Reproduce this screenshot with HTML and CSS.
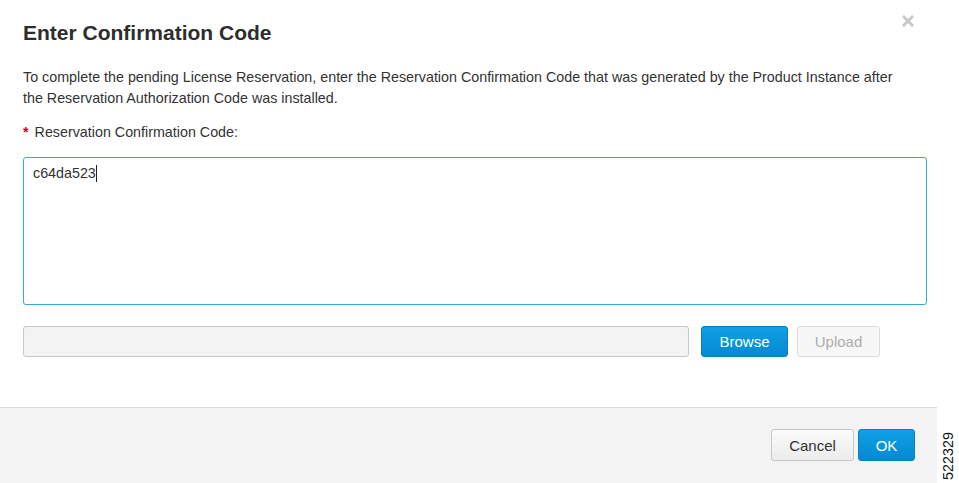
FILE: index.html
```html
<!DOCTYPE html>
<html>
<head>
<meta charset="utf-8">
<link rel="stylesheet" href="styles.css">
</head>
<body>
<div class="page">
  <div class="dialog">
    <div class="body">
      <div class="head">
        <h1 class="title">Enter Confirmation Code</h1>
        <button class="close" aria-label="Close">
          <svg width="12" height="12" viewBox="0 0 12 12"><path d="M2 2 L10 10 M10 2 L2 10" stroke="#c9c9c9" stroke-width="3" stroke-linecap="square"/></svg>
        </button>
      </div>
      <p class="intro">To complete the pending License Reservation, enter the Reservation Confirmation Code that was generated by the Product Instance after the Reservation Authorization Code was installed.</p>
      <div class="label"><span class="req">*</span> Reservation Confirmation Code:</div>
      <div class="textarea"><span>c64da523</span><span class="caret"></span></div>
      <div class="filerow">
        <div class="filefield"></div>
        <button class="btn btn-primary browse">Browse</button>
        <button class="btn btn-disabled upload">Upload</button>
      </div>
    </div>
    <div class="footer">
      <button class="btn btn-default cancel">Cancel</button>
      <button class="btn btn-primary ok">OK</button>
    </div>
  </div>
  <div class="side"><span class="side-num">522329</span></div>
</div>
</body>
</html>
```

FILE: styles.css
```css
html, body {
  margin: 0;
  padding: 0;
  background: #fff;
}
body {
  font-family: "Liberation Sans", Arial, sans-serif;
  color: #333;
}
.page {
  display: flex;
  width: 959px;
  height: 483px;
}
.dialog {
  width: 937px;
  height: 483px;
  display: flex;
  flex-direction: column;
  background: #fff;
}
.body {
  flex: 1;
  padding: 0 10px 0 23px;
}
.head {
  display: flex;
  justify-content: space-between;
  align-items: flex-start;
}
.title {
  margin: 21px 0 0 0;
  font-size: 21px;
  line-height: 24px;
  font-weight: bold;
  color: #2d2d2d;
}
.close {
  border: 0;
  background: none;
  padding: 0;
  margin: 15px 13px 0 0;
  width: 12px;
  height: 12px;
  display: block;
}
.close svg { display: block; }
.intro {
  margin: 22px 0 0 0;
  width: 880px;
  font-size: 14.3px;
  line-height: 21px;
  color: #333;
}
.label {
  margin-top: 13px;
  font-size: 14.3px;
  line-height: 20px;
  color: #333;
}
.req {
  color: #d0021b;
  font-weight: bold;
  margin-right: 2px;
}
.textarea {
  margin-top: 15px;
  width: 904px;
  height: 148px;
  box-sizing: border-box;
  border: 1px solid #35abd9;
  border-radius: 3px;
  padding: 5px 9px;
  font-size: 14.3px;
  line-height: 20px;
  color: #333;
  display: flex;
  align-items: flex-start;
}
.caret {
  display: inline-block;
  width: 1px;
  height: 17px;
  margin-top: 2px;
  background: #222;
}
.filerow {
  display: flex;
  align-items: center;
  margin-top: 21px;
}
.filefield {
  width: 666px;
  height: 31px;
  box-sizing: border-box;
  background: #f3f3f3;
  border: 1px solid #c8c8c8;
  border-radius: 3px;
}
.btn {
  font-family: "Liberation Sans", Arial, sans-serif;
  font-size: 15px;
  box-sizing: border-box;
  border-radius: 3px;
  padding: 0;
  display: flex;
  align-items: center;
  justify-content: center;
}
.btn-primary {
  background: linear-gradient(#0fa0e3, #0689d2);
  border: 1px solid #0a7fc2;
  color: #fff;
}
.btn-default {
  background: linear-gradient(#fbfbfb, #ececec);
  border: 1px solid #c6c6c6;
  color: #333;
}
.btn-disabled {
  background: #f7f7f7;
  border: 1px solid #dcdcdc;
  color: #adadad;
}
.browse {
  margin-left: 12px;
  width: 87px;
  height: 31px;
}
.upload {
  margin-left: 9px;
  width: 83px;
  height: 31px;
}
.footer {
  height: 76px;
  box-sizing: border-box;
  border-top: 1px solid #dcdcdc;
  background: #f3f3f3;
  display: flex;
  justify-content: flex-end;
  align-items: flex-start;
  padding: 21px 22px 0 0;
}
.cancel {
  width: 83px;
  height: 32px;
}
.ok {
  margin-left: 4px;
  width: 57px;
  height: 32px;
}
.side {
  flex: 1;
  display: flex;
  align-items: flex-end;
  justify-content: center;
  padding-bottom: 3px;
}
.side-num {
  writing-mode: vertical-rl;
  transform: rotate(180deg);
  font-size: 14.4px;
  line-height: 16px;
  color: #111;
}
```
